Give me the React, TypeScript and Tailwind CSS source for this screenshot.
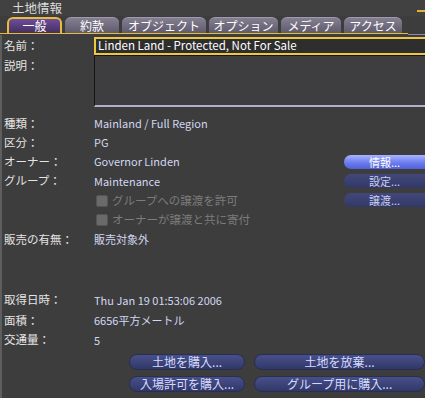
import React from "react";

const font = { fontFamily: '"Noto Sans CJK JP", "Noto Sans", sans-serif' };

function Tab({ label, active, w }: { label: string; active?: boolean; w: string }) {
  return (
    <div
      className={
        "h-[16px] rounded-t-[6px] flex items-center justify-center text-[12px] leading-none text-white " +
        w +
        " " +
        (active
          ? "bg-gradient-to-b from-[#6e4c9c] to-[#45305f] border-2 border-b-0 border-[#e6bc3c]"
          : "bg-gradient-to-b from-[#857f92] to-[#605a6c] border-t border-[#a09aae]")
      }
    >
      {label}
    </div>
  );
}

function Row({ label, value, h }: { label: string; value?: string; h: string }) {
  return (
    <div className={"flex items-center " + h}>
      <div className="w-[90px] text-[11.5px] text-[#e4e4e4]">{label}</div>
      {value && <div className="text-[#d2d8f2]">{value}</div>}
    </div>
  );
}

function SideBtn({ label, bright }: { label: string; bright?: boolean }) {
  return (
    <div
      className={
        "h-[14px] w-[90px] rounded-l-full flex items-center pl-[25px] text-[11px] leading-none " +
        (bright
          ? "bg-gradient-to-b from-[#a8b4ff] via-[#7080f0] to-[#5060d8] text-white"
          : "bg-gradient-to-b from-[#42487a] to-[#323866] text-[#c8d0f4]")
      }
    >
      {label}
    </div>
  );
}

function Check({ label }: { label: string }) {
  return (
    <div className="flex items-center h-[19px] pl-[92px]">
      <div className="w-[12px] h-[12px] rounded-[2px] bg-[#6a6a6a] border border-[#555] mr-[4px]" />
      <span className="text-[#7c7c7c] text-[11.5px]">{label}</span>
    </div>
  );
}

function BottomBtn({ label, w }: { label: string; w: string }) {
  return (
    <div
      className={
        "h-[16px] rounded-full bg-gradient-to-b from-[#48508a] to-[#313868] border border-[#2a2e50] flex items-center justify-center text-[12px] leading-none text-[#d4daff] " +
        w
      }
    >
      {label}
    </div>
  );
}

export default function App() {
  return (
    <div className="w-[425px] h-[398px] bg-[#3d3d3d] overflow-hidden text-[11px]" style={font}>
      {/* title bar */}
      <div className="h-[16px] bg-[#414141] flex items-center pl-[12px] text-[12.5px] leading-none text-[#dcdcdc] relative">
        <span>土地情報</span>
        <div className="absolute right-0 top-[10px] w-[8px] h-[2px] bg-[#e8b030]" />
      </div>
      {/* tabs */}
      <div className="flex items-end h-[17px] pl-[7px] gap-[3px]">
        <Tab label="一般" active w="w-[55px]" />
        <Tab label="約款" w="w-[54px]" />
        <Tab label="オブジェクト" w="w-[84px]" />
        <Tab label="オプション" w="w-[69px]" />
        <Tab label="メディア" w="w-[60px]" />
        <Tab label="アクセス" w="w-[58px]" />
      </div>
      <div className="flex">
        <div className="h-[1px] w-[408px] bg-[#e6bc3c]" />
        <div className="h-[1px] flex-1 bg-[#8c88b4] mt-[1px]" />
      </div>
      {/* panel */}
      <div className="border-l-2 border-[#5e5e5e] pl-[2px] h-[364px]">
        {/* name */}
        <div className="flex items-center pt-[2px] h-[20px]">
          <div className="w-[90px] text-[11.5px] text-[#e4e4e4]">名前：</div>
          <div className="flex-1 h-[18px] border-2 border-r-0 border-[#ecc840] bg-[#2e2e2e] flex items-center pl-[2px] text-white text-[11.5px]">
            Linden Land - Protected, Not For Sale
          </div>
        </div>
        {/* description */}
        <div className="flex">
          <div className="w-[90px] text-[11.5px] text-[#e4e4e4] pt-[2px]">説明：</div>
          <div className="flex-1 h-[52px] border-t border-l border-[#151515] border-b-2 border-b-[#b4b0cc] bg-[#3e3e40]" />
        </div>
        <div className="h-[7px]" />
        <div className="flex">
          <div className="flex-1">
            <Row label="種類：" value="Mainland / Full Region" h="h-[19px]" />
            <Row label="区分：" value="PG" h="h-[19px]" />
            <Row label="オーナー：" value="Governor Linden" h="h-[19px]" />
            <Row label="グループ：" value="Maintenance" h="h-[20px]" />
            <Check label="グループへの譲渡を許可" />
            <Check label="オーナーが譲渡と共に寄付" />
          </div>
          <div className="w-[81px] pt-[41px] flex flex-col gap-[5px]">
            <SideBtn label="情報..." bright />
            <SideBtn label="設定..." />
            <SideBtn label="譲渡..." />
          </div>
        </div>
        <Row label="販売の有無：" value="販売対象外" h="h-[21px]" />
        <div className="h-[40px]" />
        <Row label="取得日時：" value="Thu Jan 19 01:53:06 2006" h="h-[20px]" />
        <Row label="面積：" value="6656平方メートル" h="h-[21px]" />
        <Row label="交通量：" value="5" h="h-[18px]" />
        <div className="flex flex-col gap-[6px] pl-[125px] pt-[5px]">
          <div className="flex gap-[9px]">
            <BottomBtn label="土地を購入..." w="w-[117px]" />
            <BottomBtn label="土地を放棄..." w="w-[172px]" />
          </div>
          <div className="flex gap-[9px]">
            <BottomBtn label="入場許可を購入..." w="w-[117px]" />
            <BottomBtn label="グループ用に購入..." w="w-[172px]" />
          </div>
        </div>
      </div>
    </div>
  );
}
